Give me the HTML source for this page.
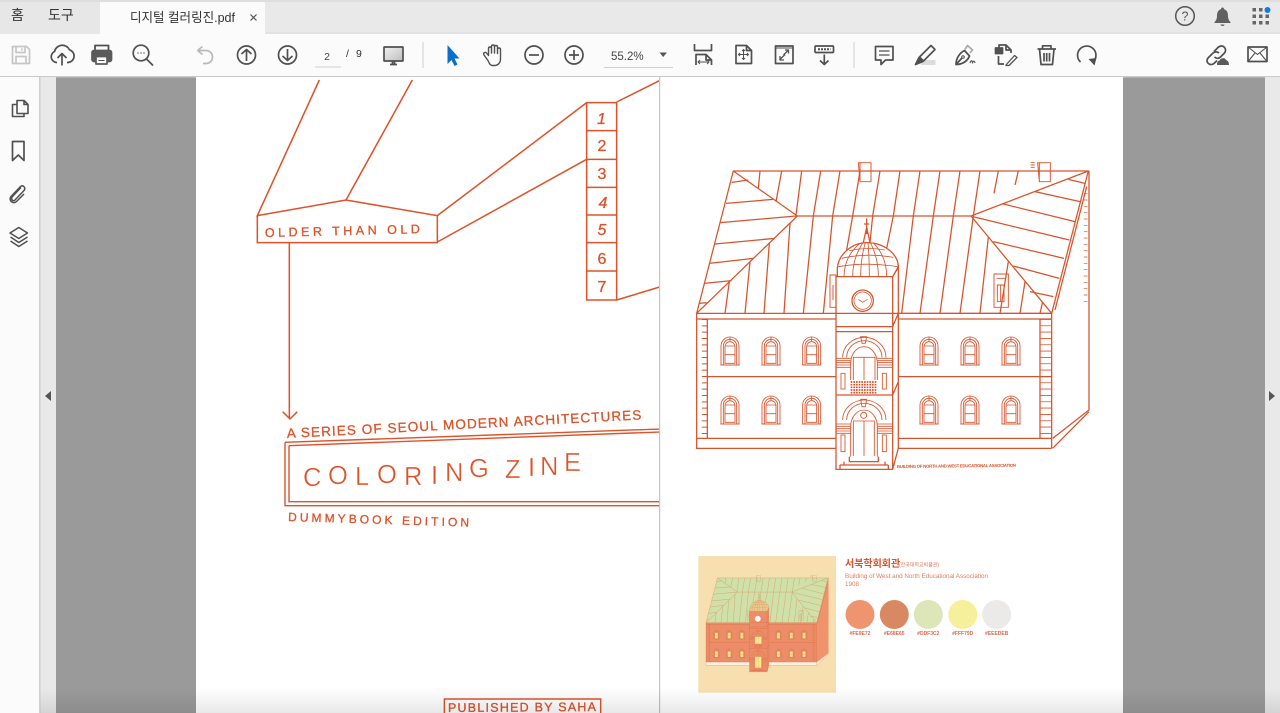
<!DOCTYPE html>
<html lang="ko"><head><meta charset="utf-8"><title>디지털 컬러링진.pdf</title>
<style>
html,body{margin:0;padding:0;width:1280px;height:713px;overflow:hidden;background:#9a9a9a}
svg{position:absolute;left:0;top:0;display:block}
text{font-family:"Liberation Sans","Noto Sans CJK KR",sans-serif}
</style></head><body>
<svg width="1280" height="713" viewBox="0 0 1280 713" xmlns="http://www.w3.org/2000/svg">
<defs>
<linearGradient id="fade" x1="0" y1="0" x2="0" y2="1"><stop offset="0" stop-color="#000" stop-opacity="0"/><stop offset="1" stop-color="#000" stop-opacity=".09"/></linearGradient>
<linearGradient id="mon" x1="0" y1="0" x2="1" y2="1"><stop offset="0" stop-color="#f2f2f2"/><stop offset="1" stop-color="#bdbdbd"/></linearGradient>
<clipPath id="lp"><rect x="196" y="77" width="463" height="636"/></clipPath>
<clipPath id="tb"><rect x="690" y="36" width="40" height="29"/></clipPath>
<g id="win" fill="none">
<path d="M-27 45V-12A27 27 0 0 1 27-12V45Z"/>
<path d="M-20 45V-12A20 20 0 0 1 20-12V45"/>
<path d="M-15 40V-10A15 15 0 0 1 15-10V40Z"/>
<path d="M-15 14H15M-15-12H15M0-40V-26M-29 45H29" />
</g>
<g id="bld" fill="none" stroke="#d8532c" stroke-width="3.8">
<path d="M130 63H1195L1085 490H20Z"/>
<path d="M130 63L322 198H843L1195 63M322 198L20 490M843 198L1085 490" />
<path d="M210 63L205 115M275 63L258 155M335 63L318 195M392 63L370 198L340 490M450 63L428 198L400 490M510 63L488 198L470 300M570 63L548 198L540 278M630 63L610 198L590 295M690 63L670 198L635 490M750 63L730 198L690 490M810 63L790 198L750 490M870 63L850 198L810 490M925 63L912 130M985 63L975 105M870 490L895 262M930 490L955 335M990 490L1005 395M1050 490L1058 455M105 490L118 395M165 490L180 335M222 490L238 280M282 490L300 220"/>
<path d="M125 97L175 90M108 160L250 148M92 218L318 198M75 282L255 265M58 340L190 325M42 400L125 392M28 460L50 458"/>
<path d="M1185 100L1135 88M1170 155L1035 125M1155 215L940 162M1138 270L848 200M1122 325L910 275M1108 385L970 348M1090 440L1020 425"/>
<path d="M505 38H543V95H510ZM510 38V95M1043 38H1081V95H1048ZM1048 38V95M1022 38H1034M1022 45H1034M1022 52H1034" stroke-width="2.8"/>
<path d="M420 375H438V472H420ZM429 405V450M912 372H955V472H912ZM920 385H948M922 405H942V455H922ZM932 405V455" stroke-width="2.8"/>
<path d="M1197 63V780L1088 865M1197 785L1088 895M1085 490V895M1190 110L1095 480"/>
<path d="M1187 130V470" stroke-width="11" stroke-dasharray="2 17"/>
<path d="M20 490V895H438M20 507H438M20 865H438M52 507V865M52 680H438M625 490H1085M625 507H1085M625 680H1085M625 865H1085M625 895H1085M1050 507V865"/>
<path d="M44 507V865" stroke-width="17" stroke-dasharray="3 16"/>
<path d="M1067 507V865" stroke-width="34" stroke-dasharray="2.5 16.5"/>
<use href="#win" x="120" y="600" stroke-width="2.6"/><use href="#win" x="243" y="600" stroke-width="2.6"/><use href="#win" x="365" y="600" stroke-width="2.6"/><use href="#win" x="717" y="600" stroke-width="2.6"/><use href="#win" x="840" y="600" stroke-width="2.6"/><use href="#win" x="963" y="600" stroke-width="2.6"/>
<use href="#win" x="120" y="777" stroke-width="2.6"/><use href="#win" x="243" y="777" stroke-width="2.6"/><use href="#win" x="365" y="777" stroke-width="2.6"/><use href="#win" x="717" y="777" stroke-width="2.6"/><use href="#win" x="840" y="777" stroke-width="2.6"/><use href="#win" x="963" y="777" stroke-width="2.6"/>
<path d="M438 380H608V958H438ZM608 380L625 350V490M438 530H608M438 545H608M438 735H608M608 530L625 490V895L608 958M608 735L625 695"/>
<path d="M442 380V355C445 310 490 278 530 278C580 278 625 310 625 352L608 380M520 278L526 250H534L540 278M530 205V250M522 222H538M526 250L530 232L534 250"/>
<path d="M510 280Q462 320 462 380M518 279Q488 325 488 380M526 278Q512 325 512 380M534 278Q538 325 538 380M542 279Q565 325 565 380M552 281Q590 320 590 380M445 350Q530 335 622 350M455 325Q530 308 610 322M478 302Q530 290 585 300" stroke-width="2.5"/>
<circle cx="518" cy="452" r="32"/><circle cx="518" cy="452" r="26" stroke-width="2.2"/><path d="M505 448L518 457L533 448" stroke-width="2.2"/>
<path d="M458 622A65 60 0 0 1 588 622M470 622A53 50 0 0 1 576 622M482 690V640A40 50 0 0 1 562 640V690M490 690V622H555V690M522 622V690M512 560H530L526 580H516Z" stroke-width="2.6"/>
<path d="M438 625H482M438 632H482M438 638H482M438 645H482M438 652H482M562 625H608M562 632H608M562 638H608M562 645H608M562 652H608" stroke-width="2.4"/>
<rect x="453" y="670" width="12" height="47" stroke-width="2.6"/><rect x="577" y="670" width="12" height="47" stroke-width="2.6"/>
<path d="M482 696H562M482 704H562M482 712H562M482 720H562M482 728H562" stroke-width="5" stroke-dasharray="5 3"/>
<path d="M458 810A65 60 0 0 1 588 810M470 810A53 50 0 0 1 576 810M482 920V830A40 50 0 0 1 562 830V920M490 918V813H553V918M522 813V918M512 748H530L526 770H516Z" stroke-width="2.6"/><circle cx="521" cy="796" r="9" stroke-width="2.6"/>
<path d="M438 822H482M438 829H482M438 836H482M438 843H482M438 850H482M562 822H608M562 829H608M562 836H608M562 843H608M562 850H608" stroke-width="2.4"/>
<rect x="453" y="855" width="12" height="50" stroke-width="2.6"/><rect x="577" y="855" width="12" height="50" stroke-width="2.6"/>
<path d="M478 920V935H565V920M462 935V945H585V935M450 945V958M595 945V958M450 945H595"/>
</g>
</defs>

<!-- chrome backgrounds -->
<rect width="1280" height="713" fill="#9a9a9a"/>
<rect x="0" y="0" width="1280" height="34" fill="#e9e9e9"/>
<rect x="0" y="0" width="1280" height="2" fill="#dedede"/>
<rect x="0" y="2" width="100" height="31" fill="#e7e7e7"/>
<rect x="100" y="2" width="165" height="32" fill="#fbfbfb"/>
<path d="M265 33H1280" stroke="#dadada"/>
<rect x="0" y="34" width="1280" height="42" fill="#fbfbfb"/>
<rect x="0" y="76" width="1280" height="1.5" fill="#c9c9c9"/>
<rect x="0" y="77" width="39" height="636" fill="#fbfbfb"/>
<rect x="39" y="77" width="1.5" height="636" fill="#cfcfcf"/>
<rect x="40.5" y="77" width="15.5" height="636" fill="#e9e9e9"/>
<rect x="1265" y="77" width="15" height="636" fill="#e9e9e9"/>
<rect x="196" y="77" width="927" height="636" fill="#fff"/>
<rect x="659" y="77" width="1.2" height="636" fill="#c4c4c4"/>

<!-- left page -->
<g clip-path="url(#lp)" fill="none" stroke="#dd532a">
<g transform="translate(240 80) scale(.33333)" stroke-width="4.6">
<path d="M238 0L52 407L318 360L592 407V488H52V407M517 0L318 360M592 407L1040 68M592 486L1040 238M1040 68H1130V660H1040ZM1040 152H1130M1040 238H1130M1040 322H1130M1040 405H1130M1040 488H1130M1040 573H1130M1130 66L1262 0M1130 660L1262 620M148 488V1015"/>
</g>
<path d="M282.7 411.7L290 419L297.3 411.7" stroke-width="1.5"/>
<g transform="translate(270 400) scale(.33333)" stroke-width="4.2">
<path d="M45 127L1170 87M57 137L1170 96M45 127V317H1170M57 137V305H1170"/>
<path d="M523 950V897H992V950"/>
</g>
</g>
<g fill="#dd532a" stroke="#dd532a" stroke-width=".3">
<text x="601.5" y="124" font-size="16" text-anchor="middle" font-style="italic">1</text>
<text x="602" y="151" font-size="16" text-anchor="middle">2</text>
<text x="602" y="179" font-size="16" text-anchor="middle">3</text>
<text x="603" y="208" font-size="16" text-anchor="middle" font-style="italic">4</text>
<text x="602" y="235" font-size="16" text-anchor="middle" font-style="italic">5</text>
<text x="602" y="264" font-size="16" text-anchor="middle">6</text>
<text x="602" y="292" font-size="16" text-anchor="middle">7</text>
<text transform="translate(265 237) rotate(-1.4)" font-size="12.5" textLength="155" lengthAdjust="spacing">OLDER  THAN  OLD</text>
<text transform="translate(287 438) rotate(-3)" font-size="13.5" textLength="355" lengthAdjust="spacing">A SERIES OF SEOUL MODERN ARCHITECTURES</text>
<text transform="translate(288 521) rotate(1.8)" font-size="12" textLength="181" lengthAdjust="spacing">DUMMYBOOK EDITION</text>
<text transform="translate(448 712) rotate(-.4)" font-size="12.5" textLength="148" lengthAdjust="spacing">PUBLISHED BY SAHA</text>
</g>
<text x="303 328 355 377 404 431 445 469 505 528 540 564" y="486 484 485 483 485 484 481 477 478 476 475 471" font-size="25.5" fill="#dd532a" stroke="#fff" stroke-width=".35">COLORINGZINE</text>

<!-- right page building -->
<g transform="translate(690 150) scale(.33333)"><use href="#bld"/></g>
<text transform="translate(897 468) rotate(-.6)" font-size="4.3" font-weight="bold" fill="#dd532a" textLength="119" lengthAdjust="spacing">BUILDING OF NORTH AND WEST EDUCATIONAL ASSOCIATION</text>

<!-- colour card -->
<rect x="698.3" y="556" width="137.7" height="136.7" fill="#f8dfb0"/>
<g transform="translate(703.9 571.3) scale(.104 .105)">
<path d="M130 63H1195L1085 490H20Z" fill="#cfe0a8"/>
<path d="M1195 63V780L1085 865V490Z" fill="#f0936c"/>
<path d="M20 490H1085V865H20Z" fill="#ea8d68"/>
<path d="M20 865H1085V895H20ZM1085 865L1197 780V785L1088 895Z" fill="#fbf1e0"/>
<path d="M438 380H608L625 350V895L608 958H438Z" fill="#ea8d68"/>
<path d="M442 380C442 320 490 278 530 278C575 278 625 310 625 350L608 380Z" fill="#e7c98c"/>
<circle cx="518" cy="452" r="30" fill="#fff"/>
<g fill="#f9e88d"><rect x="105" y="585" width="30" height="55"/><rect x="228" y="585" width="30" height="55"/><rect x="350" y="585" width="30" height="55"/><rect x="702" y="585" width="30" height="55"/><rect x="825" y="585" width="30" height="55"/><rect x="948" y="585" width="30" height="55"/><rect x="105" y="762" width="30" height="55"/><rect x="228" y="762" width="30" height="55"/><rect x="350" y="762" width="30" height="55"/><rect x="702" y="762" width="30" height="55"/><rect x="825" y="762" width="30" height="55"/><rect x="948" y="762" width="30" height="55"/><rect x="490" y="622" width="65" height="68"/><rect x="490" y="813" width="63" height="105"/></g>
<use href="#bld" opacity=".5"/>
</g>
<text x="845" y="567" font-size="10" font-weight="bold" fill="#d9532a">서북학회회관</text>
<text x="899" y="566.5" font-size="5" fill="#e07d5d">(한국대학교박물관)</text>
<text x="845" y="578" font-size="6.3" fill="#e07d5d" textLength="143" lengthAdjust="spacing">Building of West and North Educational Association</text>
<text x="845" y="586" font-size="6.3" fill="#e07d5d">1908</text>
<circle cx="860" cy="614.5" r="14.5" fill="#ee9570"/>
<circle cx="894.3" cy="614.5" r="14.5" fill="#d98962"/>
<circle cx="928.3" cy="614.5" r="14.5" fill="#dce6b8"/>
<circle cx="962.7" cy="614.5" r="14.5" fill="#f6ef9b"/>
<circle cx="996.7" cy="614.5" r="14.5" fill="#ebeae8"/>
<g font-size="5" font-weight="bold" fill="#e0694a" text-anchor="middle"><text x="860" y="635">#FE9E72</text><text x="894.3" y="635">#E68E65</text><text x="928.3" y="635">#DDF3C2</text><text x="962.7" y="635">#FFF79D</text><text x="996.7" y="635">#EEEDEB</text></g>

<rect x="40" y="688" width="1240" height="25" fill="url(#fade)"/>

<!-- tabs -->
<text x="11" y="20" font-size="14" fill="#333">홈</text>
<text x="48" y="20" font-size="14" fill="#333">도구</text>
<text x="130" y="22" font-size="13" fill="#333" textLength="105" lengthAdjust="spacingAndGlyphs">디지털 컬러링진.pdf</text>
<path d="M250.5 14.5l6 6m0-6l-6 6" stroke="#555" stroke-width="1.2" fill="none"/>

<!-- top right -->
<g fill="none" stroke="#555" stroke-width="1.5"><circle cx="1185" cy="16" r="9.3"/></g>
<text x="1185" y="20.5" font-size="12.5" fill="#555" text-anchor="middle">?</text>
<path d="M1222.5 7.5c1 0 1.5.7 1.5 1.6 3 1 4 3.5 4 6.5 0 3 .8 5 2.5 6.4v1h-16v-1c1.7-1.4 2.5-3.4 2.5-6.4 0-3 1-5.5 4-6.5 0-.9.5-1.6 1.500-1.600zM1220.5 24.500h4c0 1-1 1.500-2 1.500s-2-.5-2-1.500z" fill="#606060"/>
<g fill="#666"><rect x="1252.5" y="8" width="3.5" height="3.5"/><rect x="1259" y="8" width="3.5" height="3.5"/><rect x="1252.5" y="14.5" width="3.5" height="3.5"/><rect x="1259" y="14.5" width="3.5" height="3.5"/><rect x="1265.5" y="14.5" width="3.5" height="3.5"/><rect x="1252.5" y="21" width="3.5" height="3.5"/><rect x="1259" y="21" width="3.5" height="3.5"/><rect x="1265.5" y="21" width="3.5" height="3.5"/></g>
<circle cx="1267.5" cy="10" r="3" fill="#0d7ee8"/>

<!-- toolbar icons -->
<g fill="none" stroke="#505050" stroke-width="1.7" stroke-linejoin="round">
<g stroke="#c6c6c6"><path d="M12.5 46.5H26.5L29.5 49.5V63.5H12.5Z"/><path d="M16 46.5V52.5H25V46.5M22 48.5V50.5M16 63.5V56.5H26V63.5"/></g>
<path d="M57 62.5H56.5A5.8 5.8 0 0 1 54.5 51.5 8 8 0 0 1 69.5 49.8 6.500 6.500 0 0 1 68 62.5H67"/><path d="M62 65.500V53.5M57.5 58L62 53.5L66.5 58"/>
<path d="M95 50.5V45.5H108.5V50.5" stroke-width="1.8"/><rect x="92" y="50.5" width="19.5" height="11" rx="2" fill="#5a5a5a" stroke="#5a5a5a"/><rect x="96" y="56.5" width="11" height="7.5" fill="#fbfbfb" stroke="#5a5a5a"/><path d="M98.5 60.5h6" stroke-width="1"/>
<circle cx="141" cy="53" r="7.8"/><path d="M146.5 59L153 65.500"/><path d="M137.5 53h1M140.5 53h1M143.5 53h1" stroke-width="1.6"/>
<path stroke="#b9b9b9" d="M197.5 50.500H206A6.500 6.500 0 0 1 206 63.500H203M197.5 50.500L202.5 46.500M197.5 50.500L202.5 54.500"/>
<circle cx="246.5" cy="55" r="9"/><path d="M246.5 61V49.5M241.5 54L246.5 49.5L251.5 54"/>
<circle cx="287.5" cy="55" r="9"/><path d="M287.5 49V60.5M282.5 56L287.5 60.5L292.5 56"/>
<rect x="384" y="47" width="19" height="14" rx=".5" fill="url(#mon)"/><path d="M390 64.5H397M392.5 61V64M394.5 61V64"/>
<path d="M694.5 44V50.5H711.5V44" /><g clip-path="url(#tb)"><path d="M696 70V54.5H706L711.5 60V70M706 54.5V60H711.5"/></g><path d="M698 62H709M700 60L698 62L700 64M707 60L709 62L707 64" stroke-width="1"/>
<path d="M736 45.5H746.5L751.5 50.5V63.5H736ZM746.5 45.5V50.5H751.5"/><path d="M743.5 49.5V59.500M738.5 54.5H748.5M742 51L743.5 49.5L745 51M742 58L743.5 59.500L745 58M740 53L738.5 54.5L740 56M747 53L748.5 54.5L747 56" stroke-width="1"/>
<rect x="775.5" y="46" width="17.5" height="17.5"/><path d="M775.500 48H793" stroke-width="1"/><path d="M780 59.500L785 54.500M780 56V60H784M788.500 50L783.500 55M785 50H788.500V53.500" stroke-width="1.300"/>
<rect x="815" y="46" width="18.5" height="6.5" rx="1"/><path d="M818 49.300H830.500" stroke-width="2" stroke-dasharray="2 1"/><path d="M824.3 54.500V64.500M820 60.500L824.3 64.500L828.5 60.500"/>
<path d="M875.5 46.5H893V60H885.500L881 64.500V60H875.5Z"/><path d="M879 51H889.5M879 55H889.5" stroke-width="1.2"/>
<rect x="921" y="60" width="14.500" height="5" fill="#dcdcdc" stroke="none"/><path d="M919.500 57L931 45.500L935 49.500L923.500 61Z"/><path d="M915.500 64.500L919 57.500L923 61.500Z" fill="#505050"/>
<path d="M956 64.500C956 58.500 959.500 53 964.500 50.500L969.500 56C967.500 61 962.500 64.500 956 64.500ZM956 64.500L962 58"/><circle cx="963" cy="57" r="1.3" stroke-width="1"/><path d="M965 49.500L967.500 45.500L972.500 50L970 53" stroke="#aaa"/><path d="M970 63C971 60.500 972 59.500 972.500 63C973.500 60.500 974.500 60.500 975 63" stroke-width="1.1"/>
<rect x="995.500" y="48" width="7" height="5.500" fill="#505050"/><path d="M999 48V45H1006L1011 50V53M1006 45V50H1011M998.500 56V64H1004"/><path d="M1006 65L1014.500 55.500L1017 57.500L1009 65.500H1006Z" stroke-width="1.3"/>
<path d="M1037.500 49H1056M1042.500 49V45.800H1051V49M1039.500 49L1041 64.500H1052.500L1054 49M1044 53V61.500M1046.700 53V61.500M1049.500 53V61.500"/>
<path d="M1080.500 62A9.200 9.200 0 1 1 1093.500 61.500"/><path d="M1088.500 59L1096.500 58L1094.500 65.500Z" fill="#505050" stroke="none"/>
<path d="M1214 51.500L1218 47.500C1220 45.500 1223 45.500 1224.500 47.500C1226 49 1226 51.500 1224 53.500L1220.500 57C1218.500 59 1216 58.500 1214.500 57"/><path d="M1219 53C1217.500 51.500 1214.500 51.500 1213 53L1208.500 57.500C1206.500 59.500 1206.500 62 1208.500 63.500C1210 65 1212.500 65 1214.500 63L1217 60.500"/>
<path d="M1217.500 64.500H1228.500C1228.500 62 1227 60.500 1225.500 60.500C1225 58 1220.500 58 1220 61C1218 61 1217.500 62.500 1217.500 64.500Z" fill="#5a5a5a" stroke="#5a5a5a" stroke-width="1"/>
<rect x="1248" y="47" width="19" height="14.500"/><path d="M1248 47L1257.500 54.500L1267 47M1248 61.500L1255 53M1267 61.500L1260 53" stroke-width="1.1"/>
<path d="M488 60.500L484 55C482.800 53 485 51.500 486.500 53L488.500 55.500V48.500C488.500 46.500 491.500 46.500 491.500 48.500V53V46.500C491.500 44.500 494.500 44.500 494.500 46.500V53V47C494.500 45 497.500 45 497.500 47V53.500V49.500C497.500 47.500 500.500 47.500 500.500 49.500V59C500.500 63 498 65.500 494 65.500H492.500C490.500 65.500 489.500 64 488 60.500Z" stroke-width="1.4"/>
<circle cx="534" cy="55" r="9"/><path d="M529 55H539"/>
<circle cx="574" cy="55" r="9"/><path d="M569 55H579M574 50V60"/>
<path d="M17 100.500H24L28 104.500V113.500H17ZM24 100.500V104.500H28M17 104.500H12.500V116.500H24V113.500" stroke-width="1.600"/>
<path d="M12.500 141.500H24V160.500L18.300 155L12.500 160.500Z"/>
<path d="M21 187.500L12.500 196.500C10.500 198.500 12 201.500 14.500 200.500L24 190.500C26 188 23.500 184.500 20.500 186.500L11 196.500C8 200 13 205 16.500 201.500L24 194" stroke-width="1.500"/>
<path d="M18.800 227.500L27.500 233L18.800 238.500L10 233ZM10.500 237L18.800 242.500L27.500 237M10.500 241L18.800 246.500L27.500 241" stroke-width="1.500"/>
</g>

<path d="M51 391V401L45 396Z" fill="#555"/>
<path d="M1269 391V401L1275 396Z" fill="#555"/>

<!-- toolbar text -->
<text x="327" y="60" font-size="10.5" fill="#444" text-anchor="middle">2</text>
<path d="M315 67H341M604 67.500H673" stroke="#cfcfcf" fill="none"/>
<text x="346" y="57" font-size="10.5" fill="#333">/</text>
<text x="356" y="57" font-size="10.5" fill="#333">9</text>
<text x="611" y="60" font-size="11.5" fill="#444">55.2%</text>
<path d="M659.500 52.500H667L663.200 57Z" fill="#555"/>
<path d="M423 42V68M854 42V68" stroke="#cfcfcf" fill="none"/>
<path d="M447.500 45L459.500 58.500H454.500L457.500 64.500L454.500 66L451.500 60L447.500 64Z" fill="#0a6fc9"/>
</svg>
</body></html>
